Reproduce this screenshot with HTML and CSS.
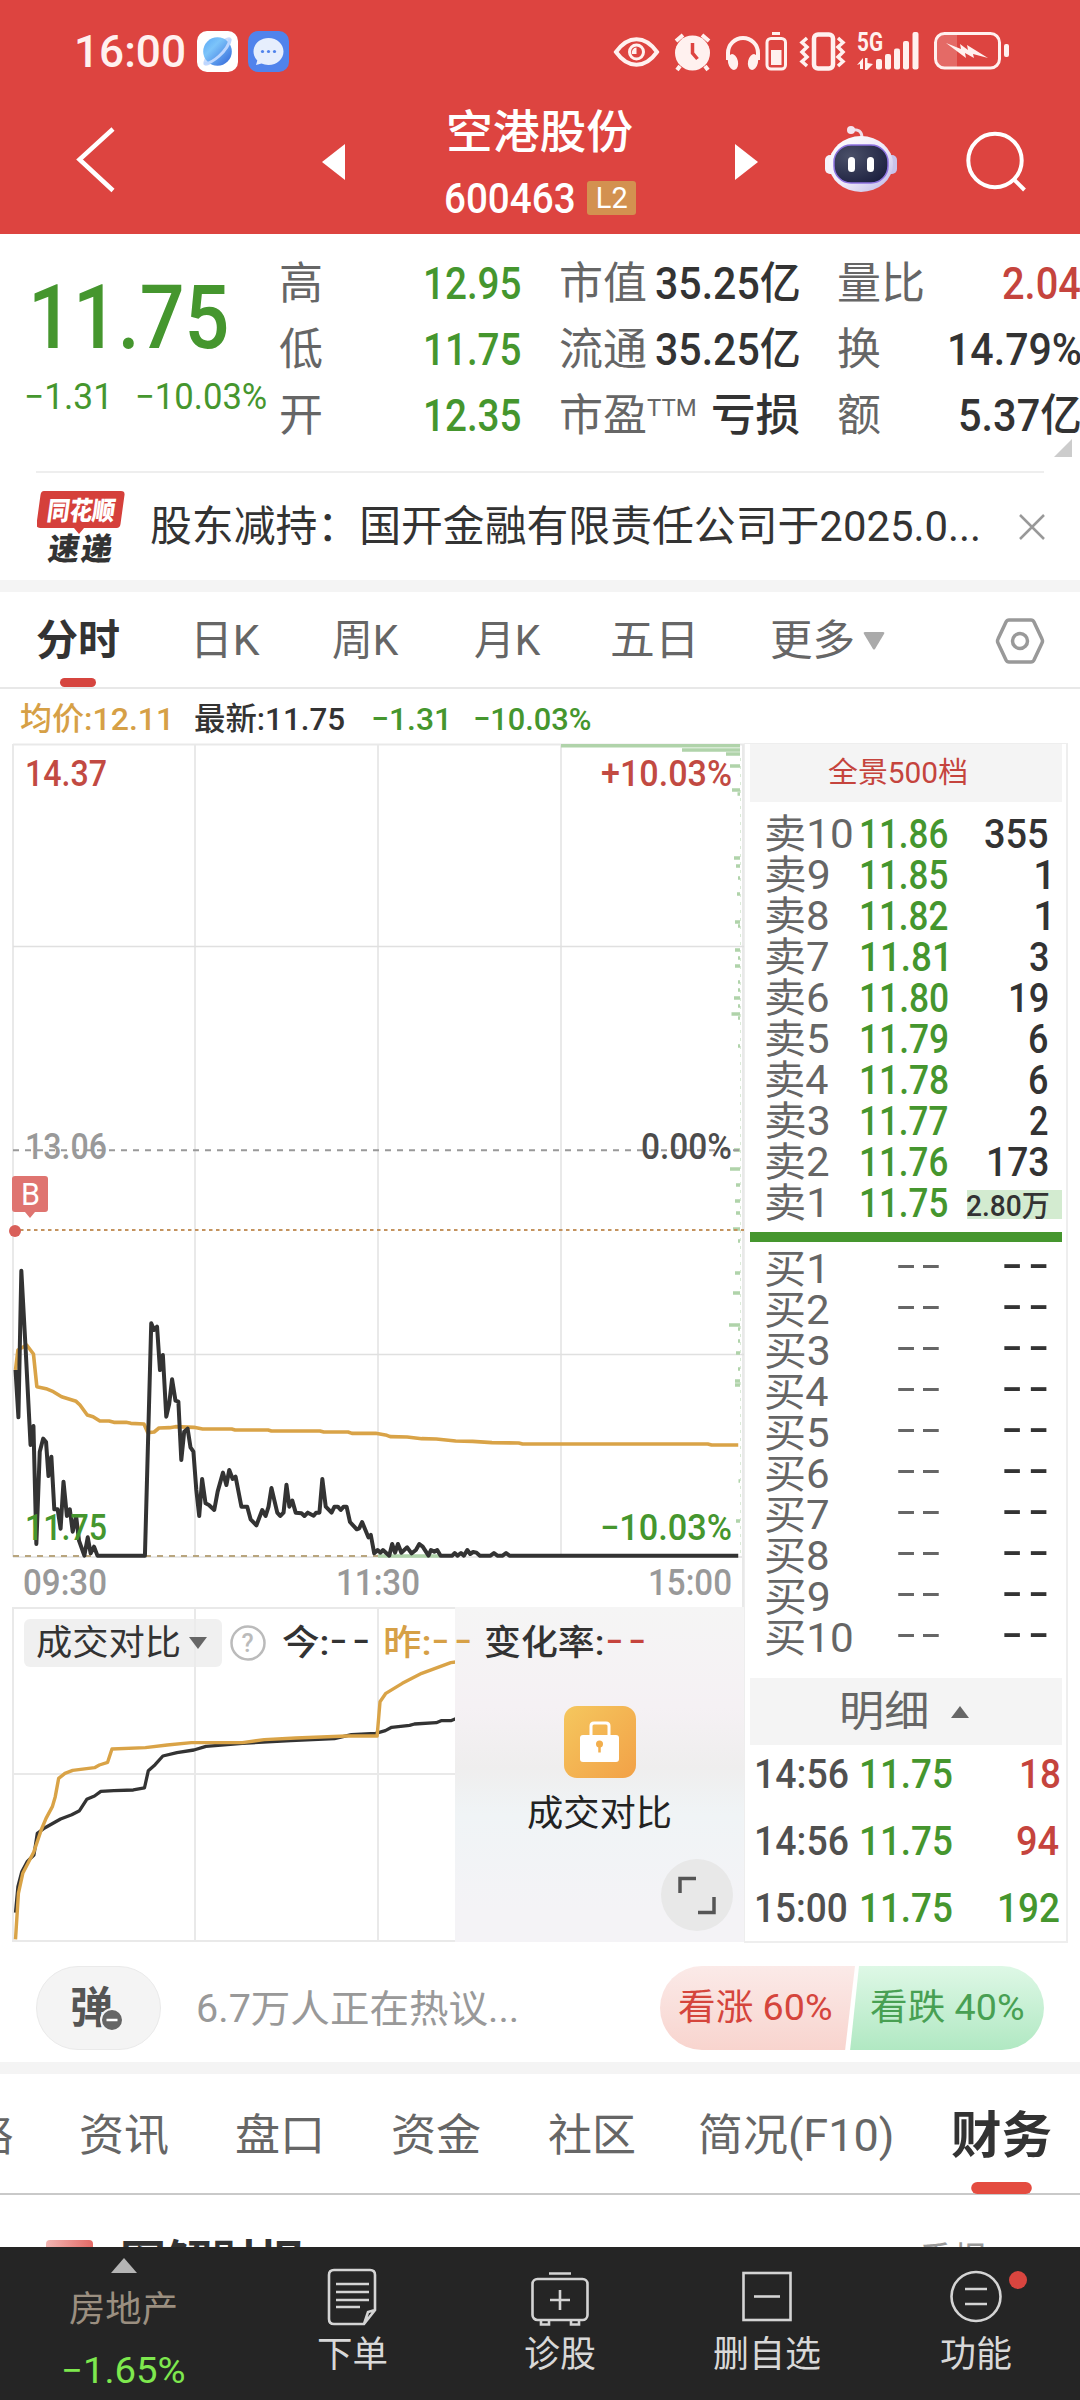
FILE: index.html
```html
<!DOCTYPE html>
<html lang="zh-CN">
<head>
<meta charset="utf-8">
<title>空港股份 600463</title>
<link rel="stylesheet" href="styles.css">
</head>
<body>
<header class="header">
  <div class="status">
    <span class="clock" data-w="107">16:00</span>
    <svg class="app" width="41" height="41" viewBox="0 0 41 41">
      <defs>
        <linearGradient id="planet" x1="0" y1="0" x2="1" y2="1"><stop offset="0" stop-color="#58a6f5"/><stop offset=".35" stop-color="#7cc4fa"/><stop offset="1" stop-color="#2f62d8"/></linearGradient>
      </defs>
      <rect width="41" height="41" rx="10" fill="#fff"/>
      <ellipse cx="20.500" cy="20.500" rx="19" ry="6" transform="rotate(-45 20.500 20.500)" fill="#cbdcfb"/>
      <circle cx="20.500" cy="20.500" r="14.300" fill="url(#planet)"/>
      <path d="M7 32c7 2 24-12 26-24" fill="none" stroke="#bcd6ff" stroke-width="3"/>
    </svg>
    <svg class="app" width="41" height="41" viewBox="0 0 41 41">
      <rect width="41" height="41" rx="10" fill="#5083ec"/>
      <path d="M20.500 7c8.500 0 15 6 15 13.500s-6.500 13.500-15 13.500c-2.600 0-5-.500-7-1.400L8 34l1.300-4.500C7 27 5.500 24 5.500 20.500 5.500 13 12 7 20.500 7z" fill="#e6eefd"/>
      <circle cx="14.500" cy="20.500" r="1.600" fill="#5083ec"/><circle cx="20.500" cy="20.500" r="1.600" fill="#5083ec"/><circle cx="26.500" cy="20.500" r="1.600" fill="#5083ec"/>
    </svg>
    <svg class="sys" width="400" height="44" viewBox="612 30 400 44">
      <g fill="none" stroke="#fff1ef" stroke-width="4">
        <path d="M616 52c12-17 29-17 41 0-12 17-29 17-41 0z"/>
        <circle cx="636.500" cy="52" r="7" stroke-width="3"/>
        <path d="M676 41l7-6M709 41l-7-6M680 66l-3 4M705 66l3 4" stroke-width="4"/>
        <path d="M728 60v-7a15 15 0 0 1 30 0v7"/>
        <rect x="767" y="38.500" width="18.500" height="30.500" rx="4" stroke-width="3"/>
        <path d="M772 33.500h8" stroke-width="3"/>
        <rect x="814" y="34.500" width="19" height="34" rx="4" stroke-width="4.500"/>
        <path d="M807 38l-5 4.500 5 4.500-5 5 5 5-5 4.500 5 4.500M838 38l5 4.500-5 4.500 5 5-5 5 5 4.500-5 4.500" stroke-width="3.500"/>
        <rect x="935.500" y="33.500" width="64" height="34.500" rx="9" stroke-width="3"/>
      </g>
      <g fill="#fff1ef">
        <path d="M636.500 47.500v6.500h-4.500a5 5 0 0 1 4.500-6.500z"/>
        <circle cx="692.500" cy="53" r="17.500"/>
        <ellipse cx="733" cy="62" rx="5" ry="8" transform="rotate(-12 733 62)"/><ellipse cx="753" cy="62" rx="5" ry="8" transform="rotate(12 753 62)"/>
        <rect x="771" y="50" width="10.500" height="15"/>
        <rect x="876" y="59" width="6" height="10.500" rx="2"/><rect x="885" y="54" width="6" height="15.500" rx="2"/><rect x="894" y="48.500" width="6" height="21" rx="2"/><rect x="903" y="41" width="6" height="28.500" rx="2"/><rect x="912.500" y="32" width="6" height="37.500" rx="2"/>
        <path d="M857 65l6-7v11h-3v-5zM865 58h2.500v5l5.500 1-6 6h-2z"/>
        <rect x="1004" y="44" width="5" height="13" rx="2"/>
        <path d="M937 35h20v32h-15q-5-1-5-7z" opacity=".22"/>
        <path d="M946 43l15 6-1-5 8 6-1-5 21 13-15-4 1 4-9-5 1 5z"/>
        <text class="net" x="857" y="51" textLength="26" lengthAdjust="spacingAndGlyphs">5G</text>
      </g>
      <path d="M692.500 43v10l5 6" fill="none" stroke="#dd4440" stroke-width="3.500"/>
    </svg>
  </div>
  <div class="nav">
    <svg class="back" width="44" height="72" viewBox="71 124 44 72"><path d="M112 129L78.500 159.500 112 190.500" fill="none" stroke="#fff" stroke-width="4.500"/></svg>
    <svg class="prev" width="23" height="36" viewBox="0 0 23 36"><path d="M23 0v36L0 18z" fill="#fff"/></svg>
    <div class="title">
      <h1 data-w="184">空港股份</h1>
      <div class="code"><span data-w="128">600463</span><b>L2</b></div>
    </div>
    <svg class="next" width="23" height="36" viewBox="0 0 23 36"><path d="M0 0v36l23-18z" fill="#fff"/></svg>
    <svg class="robot" width="72" height="68" viewBox="825 125 72 68">
      <defs>
        <linearGradient id="helmet" x1="0" y1="0" x2="1" y2="1"><stop offset="0" stop-color="#fff"/><stop offset=".55" stop-color="#eeeaf8"/><stop offset="1" stop-color="#b9b3e6"/></linearGradient>
        <radialGradient id="visor" cx=".3" cy=".3" r=".8"><stop offset="0" stop-color="#4a5068"/><stop offset="1" stop-color="#1d2140"/></radialGradient>
      </defs>
      <path d="M851 130q11-2 11 8" fill="none" stroke="#efdfea" stroke-width="3"/><circle cx="851" cy="130" r="4" fill="#f4e5f0"/>
      <rect x="825" y="155" width="12" height="19" rx="5" fill="#f6f2fb"/><rect x="885" y="155" width="12" height="19" rx="5" fill="#c9c3ea"/>
      <ellipse cx="861" cy="164" rx="32" ry="28" fill="url(#helmet)"/>
      <rect x="834" y="145" width="54" height="38" rx="17" fill="url(#visor)" stroke="#8d72e0" stroke-width="1.500"/>
      <rect x="848" y="157" width="7" height="15" rx="3.500" fill="#fff"/><rect x="867" y="157" width="7" height="15" rx="3.500" fill="#fff"/>
    </svg>
    <svg class="search" width="62" height="62" viewBox="964 130 62 62"><circle cx="995" cy="160.500" r="26.700" fill="none" stroke="#fff" stroke-width="4"/><path d="M1013.500 179l11 11" stroke="#fff" stroke-width="4"/></svg>
  </div>
</header>

<section class="quote">
  <div class="last">
    <strong data-w="192">11.75</strong>
    <div class="chg"><span data-w="80">−1.31</span><span data-w="129">−10.03%</span></div>
  </div>
  <div class="facts">
    <i>高</i><em class="green" data-w="95">12.95</em><i>市值</i><em data-w="143">35.25亿</em><i>量比</i><em class="red" data-w="77">2.04</em>
    <i>低</i><em class="green" data-w="95">11.75</em><i>流通</i><em data-w="143">35.25亿</em><i>换</i><em data-w="131">14.79%</em>
    <i>开</i><em class="green" data-w="95">12.35</em><i>市盈<sup>TTM</sup></i><em data-w="86">亏损</em><i>额</i><em data-w="120">5.37亿</em>
  </div>
  <svg class="corner" width="18" height="18" viewBox="0 0 18 18"><path d="M18 0v18H0z" fill="#ccc"/></svg>
</section>
<section class="notice">
  <svg width="90" height="74" viewBox="38 489 90 74">
    <path d="M44 490h78q4 0 3.500 4l-4 29q-.500 4-4 4H85l-5 6-5-6H41q-4 0-3.500-4l4-29q.500-4 3.500-4z" fill="#d5403b"/>
    <text class="logo-a" transform="translate(47 519) skewX(-8)" textLength="68" lengthAdjust="spacingAndGlyphs">同花顺</text>
    <text class="logo-b" transform="translate(48 559) skewX(-8)" textLength="64" lengthAdjust="spacing">速递</text>
  </svg>
  <p data-w="827">股东减持：国开金融有限责任公司于2025.0...</p>
  <svg width="26" height="26" viewBox="0 0 26 26"><path d="M1 1l24 24M25 1L1 25" stroke="#999" stroke-width="2.500"/></svg>
</section>

<nav class="periods">
  <b class="on" data-w="82">分时</b><span data-w="63">日K</span><span data-w="66">周K</span><span data-w="66">月K</span><span data-w="80">五日</span><span data-w="82">更多</span>
  <svg width="22" height="18" viewBox="0 0 22 18"><path d="M2 0h18q2 0 1 2l-9 15q-1 1-2 0L1 2Q0 0 2 0z" fill="#aaa"/></svg>
  <svg width="50" height="48" viewBox="0 0 50 48"><path d="M14 3h22q2 0 3 2l8 17q1 2 0 4l-8 17q-1 2-3 2H14q-2 0-3-2L3 26q-1-2 0-4l8-17q1-2 3-2z" fill="none" stroke="#999" stroke-width="3.500"/><circle cx="25" cy="24" r="7.500" fill="none" stroke="#999" stroke-width="3.500"/></svg>
</nav>
<div class="legend"><span class="gold" data-w="147">均价:12.11</span><span data-w="149">最新:11.75</span><span class="green" data-w="73">−1.31</span><span class="green" data-w="116">−10.03%</span></div>

<main class="market">
  <div class="charts">
    <svg class="price" width="744" height="864" viewBox="0 743 744 864">
      <g stroke="#e9e9e9" stroke-width="2" fill="none">
        <path d="M13 744.500h731M195 744v813M378 744v813M561 744v813M13 744v813M743 744v864M13 1557h731"/>
        <path d="M13 946.500h731M13 1354.500h731" stroke-width="1.500" stroke="#e0e0e0"/>
      </g>
      <path d="M561 745.800H740M682 750H740M726 754H740M730 766H740M732 790H740M737.500 794H740M734 858H740M736 866H740M738 878H740M737 894H740M735 922H740M738 926H740M735 950H740M738 958H740M735 966H740M738 982H740M738 990H740M734 998H740M738 1006H740M731.500 1014H740M738 1018H740M738 1046H740M734 1150H740M730 1169H740M736 1185H740M735 1201H740M736 1213H740M733 1229H740M738 1241H740M735 1273H740M733 1293H740M729 1325H740M738 1329H740M738 1341H740M736 1353H740M738 1369H740M735 1381H740M735 1385H740M738.500 1481H740M736 1521H740M378 1556H440" stroke="#b0d3aa" stroke-width="3.400"/>
      <path d="M740.500 758V1557" stroke="#d9ead6" stroke-width="1" stroke-dasharray="3 5"/>
      <path d="M13 1150.300H740" stroke="#999" stroke-width="2" stroke-dasharray="6 6"/>
      <path d="M20 1230H744" stroke="#c4935f" stroke-width="2.200" stroke-dasharray="3.500 3.500"/>
      <path d="M13 1556H378" stroke="#b8a57e" stroke-width="2" stroke-dasharray="6 6"/>
      <g transform="translate(0 1130) scale(.48473 .33333)" fill="none" stroke-linejoin="round">
        <polyline vector-effect="non-scaling-stroke" stroke="#d9a347" stroke-width="3.600" points="32,720 37,660 55,645 69,672 76,770 95,776 110,785 127,800 157,814 165,825 180,855 192,860 206,873 225,873 235,877 260,877 270,880 297,882 305,908 318,906 328,894 350,893 362,890 400,892 418,897 478,897 485,900 553,900 560,903 660,903 668,906 718,906 726,910 775,910 798,916 805,920 840,921 870,926 900,927 940,933 975,934 1015,938 1070,939 1078,942 1460,942 1468,945 1523,945"/>
        <polyline vector-effect="non-scaling-stroke" stroke="#333" stroke-width="4" points="32,720 38,862 44,422 53,660 63,945 69,888 75,1242 82,965 89,926 95,936 100,1038 106,980 112,1138 119,1138 125,1196 131,1055 138,1158 144,1138 150,1205 157,1158 163,1232 174,1277 181,1222 187,1270 194,1250 201,1277 299,1277 312,580 318,600 324,590 330,720 336,675 343,860 349,822 355,748 362,812 368,815 374,990 380,905 387,896 393,952 399,965 405,1080 411,1158 417,1047 424,1120 431,1125 442,1140 449,1085 460,1028 467,1065 473,1020 480,1047 486,1040 498,1130 510,1130 517,1168 529,1186 541,1140 548,1158 554,1130 560,1074 572,1148 578,1158 585,1148 591,1064 597,1130 603,1112 610,1148 622,1150 628,1158 635,1148 647,1157 652,1148 659,1148 665,1047 672,1130 684,1148 690,1130 697,1130 703,1140 709,1130 715,1130 722,1176 736,1198 741,1195 747,1176 760,1222 765,1215 772,1270 779,1260 785,1268 790,1260 803,1277 809,1242 815,1268 821,1242 828,1268 840,1252 849,1270 858,1260 865,1242 872,1250 884,1277 889,1260 896,1265 902,1260 909,1277 933,1277 938,1269 944,1277 951,1269 957,1277 964,1260 970,1272 976,1266 983,1268 990,1277 1012,1277 1019,1269 1026,1277 1037,1277 1044,1269 1051,1277 1523,1277"/>
      </g>
      <circle cx="15" cy="1231" r="6" fill="#d9605a"/>
      <path d="M15 1176h30q3 0 3 3v30q0 3-3 3h-10l-5 6-5-6H15q-3 0-3-3v-30q0-3 3-3z" fill="#df7470"/>
      <text x="21" y="1204.500" font-size="32" fill="#fff" textLength="19" lengthAdjust="spacingAndGlyphs">B</text>
      <g class="tick">
        <text x="25" y="786" fill="#c24a42" textLength="82" lengthAdjust="spacingAndGlyphs">14.37</text>
        <text x="601" y="786" fill="#c24a42" textLength="131" lengthAdjust="spacingAndGlyphs">+10.03%</text>
        <text x="25" y="1159" fill="#999" textLength="82" lengthAdjust="spacingAndGlyphs">13.06</text>
        <text x="641" y="1159" fill="#4c4c4c" textLength="91" lengthAdjust="spacingAndGlyphs">0.00%</text>
        <text x="25" y="1540" fill="#45962e" textLength="82" lengthAdjust="spacingAndGlyphs">11.75</text>
        <text x="600" y="1540" fill="#45962e" textLength="132" lengthAdjust="spacingAndGlyphs">−10.03%</text>
        <text x="23" y="1595" fill="#999" textLength="84" lengthAdjust="spacingAndGlyphs">09:30</text>
        <text x="336" y="1595" fill="#999" textLength="84" lengthAdjust="spacingAndGlyphs">11:30</text>
        <text x="648" y="1595" fill="#999" textLength="84" lengthAdjust="spacingAndGlyphs">15:00</text>
      </g>
    </svg>
    <div class="compare">
      <svg width="744" height="335" viewBox="0 1607 744 335">
        <path d="M13 1608h731M13 1774h731M13 1941h731M13 1607v335M195 1607v335M378 1607v335" stroke="#e9e9e9" stroke-width="2"/>
        <g transform="translate(0 1590) scale(.48473 .33333)" fill="none" stroke-linejoin="round">
          <polyline vector-effect="non-scaling-stroke" stroke="#333" stroke-width="3.300" points="32,968 37,890 45,845 56,815 70,795 77,730 92,714 125,687 148,674 164,662 179,628 195,618 208,604 235,602 275,600 298,594 306,542 320,524 336,498 365,488 400,480 425,469 500,460 600,452 690,446 725,434 775,430 795,422 808,412 845,406 855,402 900,398 910,392 930,392 940,386"/>
          <polyline vector-effect="non-scaling-stroke" stroke="#d9a347" stroke-width="3.400" points="32,1048 38,910 47,850 70,785 85,720 95,685 108,650 114,620 121,565 134,550 150,541 195,533 205,525 222,517 231,477 300,473 345,465 395,458 500,458 545,449 610,444 715,438 778,438 784,335 796,310 830,280 870,250 930,218 940,216"/>
        </g>
      </svg>
      <div class="locked">
        <svg width="72" height="72" viewBox="0 0 72 72">
          <defs><linearGradient id="lock" x1="0" y1="0" x2="1" y2="1"><stop offset="0" stop-color="#f5c75e"/><stop offset="1" stop-color="#f2a147"/></linearGradient></defs>
          <rect width="72" height="72" rx="13" fill="url(#lock)"/>
          <path d="M27 30V20q0-3 3-3h12q3 0 3 3v10" fill="none" stroke="#fff" stroke-width="3"/>
          <rect x="16" y="29" width="39" height="27" rx="3" fill="#fff"/><circle cx="35.500" cy="38" r="3.500" fill="#f2ae4c"/><path d="M35.500 38v8.500" stroke="#f2ae4c" stroke-width="2.500"/>
        </svg>
        <span data-w="142">成交对比</span>
        <svg class="expand" width="72" height="72" viewBox="0 0 72 72"><circle cx="36" cy="36" r="36" fill="#e8e8e8"/><path d="M19 34V19.500h16M53 38v15.500H37" fill="none" stroke="#555" stroke-width="3.500"/></svg>
      </div>
      <div class="stats">
        <div class="pick"><span data-w="142">成交对比</span><svg width="18" height="12" viewBox="0 0 18 12"><path d="M0 0h18L9 12z" fill="#666"/></svg></div>
        <svg width="36" height="36" viewBox="0 0 36 36"><circle cx="18" cy="18" r="16.500" fill="none" stroke="#bbb" stroke-width="2.500"/><text x="11.500" y="27" font-size="25" fill="#bbb">?</text></svg>
        <span data-w="44">今:</span><u class="dash" data-w="37">--</u>
        <span class="gold" data-w="44">昨:</span><u class="dash gold" data-w="37">--</u>
        <span data-w="117">变化率:</span><u class="dash red" data-w="37">--</u>
      </div>
    </div>
  </div>

  <aside class="book">
    <div class="bar top"><span data-w="138">全景500档</span></div>
    <div class="rows sell">
      <div><i data-w="86">卖10</i><b data-w="86">11.86</b><em data-w="63">355</em></div>
      <div><i data-w="62">卖9</i><b data-w="86">11.85</b><em data-w="12">1</em></div>
      <div><i data-w="62">卖8</i><b data-w="86">11.82</b><em data-w="12">1</em></div>
      <div><i data-w="62">卖7</i><b data-w="84">11.81</b><em data-w="18">3</em></div>
      <div><i data-w="62">卖6</i><b data-w="86">11.80</b><em data-w="37">19</em></div>
      <div><i data-w="62">卖5</i><b data-w="86">11.79</b><em data-w="18">6</em></div>
      <div><i data-w="62">卖4</i><b data-w="86">11.78</b><em data-w="18">6</em></div>
      <div><i data-w="62">卖3</i><b data-w="86">11.77</b><em data-w="18">2</em></div>
      <div><i data-w="62">卖2</i><b data-w="86">11.76</b><em data-w="59">173</em></div>
      <div class="big"><i data-w="56">卖1</i><b data-w="86">11.75</b><em data-w="82">2.80万</em></div>
    </div>
    <div class="ratio"></div>
    <div class="rows buy">
      <div><i data-w="56">买1</i><u data-w="43">--</u><u data-w="43">--</u></div>
      <div><i data-w="62">买2</i><u data-w="43">--</u><u data-w="43">--</u></div>
      <div><i data-w="62">买3</i><u data-w="43">--</u><u data-w="43">--</u></div>
      <div><i data-w="62">买4</i><u data-w="43">--</u><u data-w="43">--</u></div>
      <div><i data-w="62">买5</i><u data-w="43">--</u><u data-w="43">--</u></div>
      <div><i data-w="62">买6</i><u data-w="43">--</u><u data-w="43">--</u></div>
      <div><i data-w="62">买7</i><u data-w="43">--</u><u data-w="43">--</u></div>
      <div><i data-w="62">买8</i><u data-w="43">--</u><u data-w="43">--</u></div>
      <div><i data-w="62">买9</i><u data-w="43">--</u><u data-w="43">--</u></div>
      <div><i data-w="86">买10</i><u data-w="43">--</u><u data-w="43">--</u></div>
    </div>
    <div class="bar detail"><span data-w="85">明细</span><svg width="18" height="12" viewBox="0 0 18 12"><path d="M0 12h18L9 0z" fill="#666"/></svg></div>
    <div class="trades">
      <div><i data-w="91">14:56</i><b data-w="90">11.75</b><em class="red" data-w="38">18</em></div>
      <div><i data-w="91">14:56</i><b data-w="90">11.75</b><em class="red" data-w="42">94</em></div>
      <div><i data-w="90">15:00</i><b data-w="90">11.75</b><em class="green" data-w="59">192</em></div>
    </div>
  </aside>
</main>

<section class="talk">
  <div class="danmu"><b>弹</b><svg width="24" height="24" viewBox="0 0 24 24"><circle cx="12" cy="12" r="11" fill="#666" stroke="#f5f5f5" stroke-width="2"/><path d="M6.500 12h11" stroke="#fff" stroke-width="2.500"/></svg></div>
  <span class="hint" data-w="318">6.7万人正在热议...</span>
  <div class="vote"><div class="up"><span data-w="152">看涨 60%</span></div><div class="down"><span data-w="152">看跌 40%</span></div></div>
</section>

<nav class="sections">
  <span class="cut">攻略</span><span data-w="87">资讯</span><span data-w="84">盘口</span><span data-w="87">资金</span><span data-w="85">社区</span><span data-w="192">简况(F10)</span><b class="on" data-w="99">财务</b>
</nav>
<section class="report"><i></i><b data-w="180">图解财报</b><span data-w="66">季报</span></section>

<footer class="dock">
  <div class="sector">
    <svg width="26" height="15" viewBox="0 0 26 15"><path d="M0 15h26L13 0z" fill="#b5b5b5"/></svg>
    <span data-w="106">房地产</span><em data-w="121">−1.65%</em>
  </div>
  <div><svg width="60" height="60" viewBox="0 0 60 60"><path d="M12 3h36q5 0 5 5v35L42 57H12q-5 0-5-5V8q0-5 5-5zM53 43l-7 2-4 12M14 17h33M14 25h33M14 33h33M14 40h24"/></svg><span data-w="69">下单</span></div>
  <div><svg width="60" height="60" viewBox="0 0 60 60"><rect x="2.500" y="12" width="55" height="41" rx="5"/><path d="M19 6.500h22M11 54v3.500h8V54M41 54v3.500h8V54M30 23v20M20 33h20"/></svg><span data-w="70">诊股</span></div>
  <div><svg width="60" height="60" viewBox="0 0 60 60"><rect x="6.500" y="6" width="47" height="47"/><path d="M17 29.500h26"/></svg><span data-w="106">删自选</span></div>
  <div class="more"><svg width="60" height="60" viewBox="0 0 60 60"><circle cx="30" cy="29.500" r="24.500"/><path d="M19 22h22M19 37h22"/></svg><span data-w="70">功能</span></div>
</footer>
<script src="fit.js"></script>
</body>
</html>
```
FILE: styles.css
```css
* { box-sizing: border-box; }
body {
  margin: 0; width: 1080px; height: 2400px; overflow: hidden; background: #fff; color: #333;
  font-family: Roboto, "Noto Sans CJK SC", sans-serif; display: flex; flex-direction: column;
}
i, em { font-style: normal; }
u { text-decoration: none; }
h1, p { margin: 0; font-weight: 400; }
svg { display: block; flex: none; }
[data-w] { display: block; flex: none; white-space: nowrap; width: max-content; transform-origin: 0 50%; justify-self: start; }
.green { color: #45962e; }
.red { color: #c5443d; }
.gold { color: #d6a046; }

.header { height: 234px; flex: none; background: #dd4440; color: #fff; }
.status { height: 103px; padding: 0 68px 0 77px; display: flex; align-items: center; }
.clock { font-size: 44px; font-weight: 500; line-height: 102px; color: #fff1ef; }
.status .app { margin-left: 10px; }
.status .clock + .app { margin-left: 13px; }
.status .sys { margin-left: auto; }
.net { font-size: 25px; font-weight: 700; }
.nav { height: 131px; display: grid; grid-template-columns: 72px 250px 124px 289px 90px 139px 1fr; }
.back { grid-column: 2; margin-top: 21px; }
.prev { grid-column: 3; margin-top: 41px; }
.title { grid-column: 4; }
.title h1 { font-size: 46px; line-height: 58px; padding-left: 3px; font-weight: 500; }
.code { display: flex; align-items: center; height: 34px; margin-top: 20px; gap: 13px; }
.code span { font-size: 42px; line-height: 34px; padding-top: 2px; font-weight: 500; }
.code b { width: 49px; height: 34px; border-radius: 3px; background: #d39150; font: 400 29px/34px Roboto, sans-serif; text-align: center; }
.next { grid-column: 5; margin-top: 41px; }
.robot { grid-column: 6; margin-top: 22px; }
.search { grid-column: 7; margin-top: 27px; }

.quote { height: 239px; flex: none; display: grid; grid-template-columns: 279px 801px; grid-template-rows: 205px 33px; }
.quote::after { content: ""; grid-column: 1 / 3; grid-row: 3; height: 2px; margin: -1px 36px 0; background: #eee; }
.last { color: #45962e; padding: 34px 0 0 26px; }
.last strong { font-size: 89px; line-height: 100px; font-weight: 500; padding-left: 8px; }
.chg { display: grid; grid-template-columns: 111px 1fr; font-size: 36px; line-height: 59px; }
.facts { display: grid; grid-template-columns: 106px 136px 38px 97px 143px 38px 88px 155px; grid-template-rows: repeat(3, 66px); padding-top: 17px; font-size: 44px; line-height: 66px; }
.facts i { color: #666; white-space: nowrap; }
.facts i:nth-child(6n+1) { grid-column: 1; }
.facts em:nth-child(6n+2) { grid-column: 2; }
.facts i:nth-child(6n+3) { grid-column: 4; }
.facts em:nth-child(6n+4) { grid-column: 5; }
.facts i:nth-child(6n+5) { grid-column: 7; }
.facts em:nth-child(6n) { grid-column: 8; }
.facts em { justify-self: end; font-weight: 500; }
.facts sup { font-size: 24px; line-height: 0; vertical-align: 15px; }
.corner { grid-column: 2; justify-self: end; margin-right: 8px; }
.notice { height: 107px; flex: none; display: grid; grid-template-columns: 114px 868px 1fr; padding-left: 37px; align-items: center; }
.notice p { font-size: 42px; line-height: 106px; }
.logo-a { font-size: 26px; font-weight: 900; fill: #fff; }
.logo-b { font-size: 31px; font-weight: 900; fill: #333; }

.periods { height: 109px; flex: none; border-top: 12px solid #f4f4f4; border-bottom: 2px solid #e8e8e8; display: grid; grid-template-columns: 160px 136px 142px 137px 159px 92px 132px 1fr; padding-left: 37px; font-size: 42px; line-height: 98px; color: #666; }
.periods svg { align-self: center; }
.periods .on { color: #333; }
.periods .on::after { content: ""; display: block; height: 9px; width: 36px; border-radius: 5px; background: #d6453f; margin: -12px auto 0; }
.legend { height: 54px; flex: none; display: grid; grid-template-columns: 174px 178px 102px 1fr; padding-left: 21px; font-size: 32px; line-height: 60px; font-weight: 500; }

.market { height: 1199px; flex: none; display: grid; grid-template-columns: 744px 324px; }
.tick { font-size: 36px; font-weight: 500; }
.compare { display: grid; height: 335px; grid-template: 335px / 744px; }
.compare > * { grid-area: 1 / 1; }
.locked { justify-self: end; width: 289px; background: linear-gradient(#f5f5f5 0, #f5f1f4 30%, #efeeee 48%, #f0f4f6 62%, #f4f3f6 90%); display: flex; flex-direction: column; align-items: center; padding-top: 99px; color: #222; }
.locked span { font-size: 36px; line-height: 72px; }
.expand { align-self: flex-end; margin: 9px 11px 0 0; }
.stats { display: grid; grid-template-columns: 206px 53px 48px 54px 48px 52px 122px 1fr; height: 48px; margin-top: 11px; padding-left: 24px; font-size: 35px; line-height: 48px; align-items: center; font-weight: 500; }
.stats span { padding-top: 2px; }
.pick { width: 198px; height: 48px; border-radius: 6px; background: rgba(235, 235, 235, .75); display: flex; align-items: center; gap: 10px; padding-left: 13px; font-weight: 400; }
.dash { letter-spacing: 4px; margin-top: -5px; }
.book { border: 2px solid #eee; border-top-width: 1px; border-left-width: 1px; padding: 0 4px 0 5px; }
.bar { background: #f4f4f4; }
.bar.top { height: 58px; padding-left: 78px; font-size: 29px; line-height: 59px; color: #c5443d; }
.rows { font-size: 40px; line-height: 41px; }
.rows > div { display: grid; grid-template-columns: 96px 100px 86px; padding-left: 16px; height: 41px; }
.sell { padding-top: 12px; height: 430px; }
.rows i { color: #666; }
.rows b, .trades b { font-weight: 500; color: #45962e; }
.rows em { justify-self: end; font-weight: 500; }
.sell .big { background: linear-gradient(#d3ebd0, #d3ebd0) right 7px / 95px 29px no-repeat; }
.sell .big em { font-size: 30px; line-height: 45px; }
.ratio { height: 10px; background: #45962e; }
.buy { padding-top: 7px; height: 436px; }
.buy u { letter-spacing: 4px; justify-self: end; line-height: 34px; color: #666; }
.buy > div { grid-template-columns: 96px 78px 107px; }
.buy u:last-child { color: #333; font-weight: 500; }
.detail { height: 67px; display: flex; align-items: center; gap: 24px; padding-left: 92px; font-size: 42px; line-height: 66px; color: #666; }
.trades { font-size: 41px; line-height: 67px; margin-top: -4px; height: 200px; }
.trades > div { display: grid; grid-template-columns: 105px 100px 97px; padding-left: 7px; height: 67px; font-weight: 500; }
.trades i { color: #505050; }
.trades em { justify-self: end; }

.talk { height: 120px; flex: none; display: grid; grid-template-columns: 162px 1fr 384px; align-items: center; padding: 12px 36px 0; }
.danmu { width: 125px; height: 84px; border-radius: 42px; background: #f4f4f4; border: 1px solid #eaeaea; display: grid; grid-template-columns: 33px 36px 1fr; align-items: center; }
.danmu b { grid-area: 1 / 2; font-size: 43px; line-height: 80px; color: #555; }
.danmu svg { grid-area: 1 / 3; margin: 24px 0 0 -6px; }
.hint { font-size: 38px; line-height: 84px; color: #999; padding-top: 2px; }
.vote { height: 84px; border-radius: 42px; overflow: hidden; display: grid; grid-template-columns: 195px 194px; font-size: 36px; line-height: 85px; }
.up { background: linear-gradient(#fbeae8, #f8d4ce); color: #d5453c; padding-left: 19px; clip-path: polygon(0 0, 195px 0, 185px 100%, 0 100%); }
.down { background: linear-gradient(#def8e6, #b0e8c2); color: #48a053; padding-left: 21px; margin-left: -5px; clip-path: polygon(9px 0, 100% 0, 100% 100%, 0 100%); }

.sections { height: 133px; flex: none; border-top: 12px solid #f4f4f4; border-bottom: 2px solid #c9c9c9; display: grid; grid-template-columns: 81px 155px 157px 156px 151px 252px 1fr; align-items: start; font-size: 44px; line-height: 124px; color: #666; }
.cut { width: 13px; overflow: hidden; direction: rtl; white-space: nowrap; }
.sections .on { font-size: 50px; color: #333; }
.sections .on::after { content: ""; display: block; width: 60px; height: 12px; border-radius: 6px; background: #e44c40; margin: -16px auto 0; }
.report { height: 52px; flex: none; display: grid; grid-template-columns: 77px 797px 1fr; padding: 45px 0 0 46px; overflow: hidden; line-height: 46px; }
.report i { width: 47px; height: 40px; border-radius: 4px; background: linear-gradient(90deg, #f3b6b3, #e46a66); }
.report b { font-size: 45px; }
.report span { font-size: 36px; color: #999; line-height: 42px; }

.dock { height: 153px; flex: none; background: #252525; color: #d8d8d8; font-size: 36px; display: grid; grid-template-columns: 247px 210px 205px 210px 208px; }
.dock > div { display: flex; flex-direction: column; align-items: center; padding-top: 20px; position: relative; }
.dock > div:not(.sector) svg { fill: none; stroke: #d4d4d4; stroke-width: 2.600; }
.dock span { line-height: 57px; }
.dock > .sector { padding-top: 11px; }
.dock .sector span { color: #9b8f80; line-height: 74px; }
.sector em { color: #7ee84e; line-height: 49px; }
.more::after { content: ""; position: absolute; left: 137px; top: 24px; width: 18px; height: 18px; border-radius: 50%; background: #d9453f; }
```
FILE: fit.js
```js
// Sets every [data-w] label to its own drawn width, ink edge to ink edge.
const ctx = document.createElement('canvas').getContext('2d');
document.querySelectorAll('[data-w]').forEach(el => {
  const cs = getComputedStyle(el);
  ctx.font = `${cs.fontWeight} ${cs.fontSize} ${cs.fontFamily}`;
  ctx.letterSpacing = cs.letterSpacing === 'normal' ? '0px' : cs.letterSpacing;
  const m = ctx.measureText(el.textContent);
  const gap = parseFloat(ctx.letterSpacing);
  const left = -m.actualBoundingBoxLeft;
  const ink = m.actualBoundingBoxRight - left - (m.actualBoundingBoxRight > m.width - gap ? gap : 0);
  const target = +el.dataset.w;
  const s = target / ink;
  const pad = parseFloat(cs.paddingLeft);
  const w = el.offsetWidth;
  el.style.transform = `scaleX(${s})`;
  el.style.marginLeft = `${-left * s + pad * (1 - s)}px`;
  el.style.marginRight = `${target - w + left * s - pad * (1 - s)}px`;
});
```
